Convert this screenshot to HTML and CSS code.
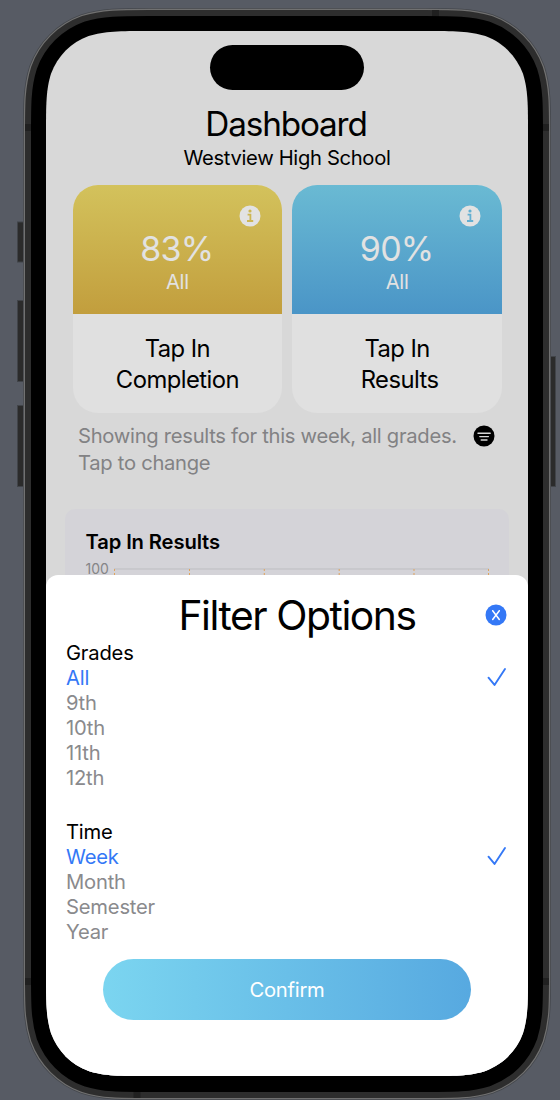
FILE: index.html
```html
<!DOCTYPE html>
<html lang="en">
<head>
<meta charset="utf-8">
<title>Dashboard</title>
<link rel="stylesheet" href="styles.css">
</head>
<body>
<div class="device">
  <svg class="frame" width="560" height="1100" viewBox="0 0 560 1100" aria-hidden="true">
    <defs>
      <path id="body" d="M149.200 31 H424.800 C454.500 31 469.400 31 485.400 36.100 C502.800 42.400 516.600 56.200 522.900 73.600 C528 89.600 528 104.500 528 134.200 V973.800 C528 1003.500 528 1018.400 522.900 1034.400 C516.600 1051.800 502.800 1065.600 485.400 1071.900 C469.400 1077 454.500 1077 424.800 1077 H149.200 C119.500 1077 104.600 1077 88.600 1071.900 C71.200 1065.600 57.400 1051.800 51.100 1034.400 C46 1018.400 46 1003.500 46 973.800 V134.200 C46 104.500 46 89.600 51.100 73.600 C57.400 56.200 71.200 42.400 88.600 36.100 C104.600 31 119.500 31 149.200 31 Z"/>
    </defs>
    <g fill="#2b2b2b" stroke="#414449" stroke-width="1">
      <rect x="17.500" y="222" width="8" height="40"/>
      <rect x="17.500" y="300.500" width="8" height="81"/>
      <rect x="17.500" y="405.500" width="8" height="81"/>
      <rect x="549" y="356.500" width="6.500" height="130"/>
    </g>
    <use href="#body" stroke="#44474c" stroke-width="46"/>
    <use href="#body" stroke="#717171" stroke-width="44.400"/>
    <use href="#body" stroke="#2d2d2d" stroke-width="42"/>
    <g fill="#202020">
      <rect x="432" y="10" width="7" height="8"/>
      <rect x="133.500" y="1090" width="7" height="8"/>
      <rect x="25" y="124" width="7" height="7"/>
      <rect x="542" y="124" width="7" height="7"/>
      <rect x="25" y="978" width="7" height="7"/>
      <rect x="542" y="978" width="7" height="7"/>
    </g>
    <use href="#body" stroke="#000" stroke-width="30"/>
  </svg>

  <div class="screen">
    <main class="dashboard">
      <div class="island"></div>
      <h1 class="title">Dashboard</h1>
      <p class="school">Westview High School</p>

      <div class="cards">
        <section class="card">
          <div class="card-top gold">
            <svg class="info" width="22" height="22" viewBox="0 0 22 22"><circle cx="11" cy="11" r="10.500" fill="#e2e2e2"/><circle cx="11" cy="6" r="1.600" fill="#cdb652"/><path d="M8.600 9.700h2.800v6M8 16h6.200" fill="none" stroke="#cdb652" stroke-width="1.800"/></svg>
            <p class="score">83%</p>
            <p class="scope">All</p>
          </div>
          <h2 class="card-name">Tap In<br>Completion</h2>
        </section>
        <section class="card">
          <div class="card-top blue">
            <svg class="info" width="22" height="22" viewBox="0 0 22 22"><circle cx="11" cy="11" r="10.500" fill="#e2e2e2"/><circle cx="11" cy="6" r="1.600" fill="#62afd1"/><path d="M8.600 9.700h2.800v6M8 16h6.200" fill="none" stroke="#62afd1" stroke-width="1.800"/></svg>
            <p class="score">90%</p>
            <p class="scope">All</p>
          </div>
          <h2 class="card-name">Tap In<br><span class="results">Results</span></h2>
        </section>
      </div>

      <div class="summary">
        <p><span class="showing">Showing results for this week, all grades.</span><br><span class="change">Tap to change</span></p>
        <svg width="22" height="22" viewBox="0 0 22 22"><circle cx="11" cy="11" r="10.500"/><path d="M5 8.200h12.200M6.800 11.600h8.600M8.200 15h5.800" stroke="#d8d8d8" stroke-width="1.400" stroke-linecap="round"/></svg>
      </div>

      <section class="chart">
        <h3 class="chart-title">Tap In Results</h3>
        <div class="plot">
          <span class="axis">100</span>
          <svg width="376" height="20" viewBox="0 0 376 20"><path d="M1 10h375" stroke="#bdbdc1"/><path d="M1.500 10v10M76.500 10v10M151.300 10v10M226.200 10v10M301 10v10M375.500 10v10" stroke="#dfa35c" stroke-dasharray="2 2"/></svg>
        </div>
      </section>
    </main>

    <section class="sheet">
      <header class="sheet-head">
        <h2 class="sheet-title">Filter Options</h2>
        <svg class="close" width="22" height="22" viewBox="0 0 22 22"><circle cx="11" cy="11" r="10.500" fill="#3478f6"/><path d="M7.700 6.700l6.600 8.800M14.300 6.700l-6.600 8.800" stroke="#fff" stroke-width="1.500" stroke-linecap="round"/></svg>
      </header>
      <ul class="options grades">
        <li class="group">Grades</li>
        <li class="selected"><span>All</span><svg width="20" height="20" viewBox="0 0 20 20"><path d="M1.500 10.700l6 7.200L18 2" fill="none" stroke="#3478f6" stroke-width="1.900" stroke-linecap="round" stroke-linejoin="round"/></svg></li>
        <li>9th</li>
        <li>10th</li>
        <li>11th</li>
        <li>12th</li>
      </ul>
      <ul class="options">
        <li class="group">Time</li>
        <li class="selected"><span>Week</span><svg width="20" height="20" viewBox="0 0 20 20"><path d="M1.500 10.700l6 7.200L18 2" fill="none" stroke="#3478f6" stroke-width="1.900" stroke-linecap="round" stroke-linejoin="round"/></svg></li>
        <li>Month</li>
        <li>Semester</li>
        <li>Year</li>
      </ul>
      <button class="confirm">Confirm</button>
    </section>
  </div>
</div>
</body>
</html>
```
FILE: styles.css
```css
* { box-sizing: border-box; }
body {
  margin: 0;
  background: #575b64;
  font-family: Inter, "Liberation Sans", sans-serif;
  color: #000;
}
h1, h2, h3, p, ul { margin: 0; padding: 0; font-weight: 400; }
ul { list-style: none; }
svg { display: block; flex: none; }
.device { display: grid; width: 560px; height: 1100px; overflow: hidden; }
.frame, .screen { grid-area: 1 / 1; }
.screen {
  display: grid;
  grid-template-rows: 1045px;
  width: 482px;
  height: 1045px;
  margin: 31px 0 0 46px;
  background: #d8d8d8;
  clip-path: path("M103.200 0 H378.800 C408.500 0 423.400 0 439.400 5.100 C456.800 11.400 470.600 25.200 476.900 42.600 C482 58.600 482 73.500 482 103.200 V941.800 C482 971.500 482 986.400 476.900 1002.400 C470.600 1019.800 456.800 1033.600 439.400 1039.900 C423.400 1045 408.500 1045 378.800 1045 H103.200 C73.500 1045 58.600 1045 42.600 1039.900 C25.200 1033.600 11.400 1019.800 5.100 1002.400 C0 986.400 0 971.500 0 941.800 V103.200 C0 73.500 0 58.600 5.100 42.600 C11.400 25.200 25.200 11.400 42.600 5.100 C58.600 0 73.500 0 103.200 0 Z");
}
.dashboard, .sheet { grid-area: 1 / 1; }
.dashboard { display: flex; flex-direction: column; padding-top: 14px; }
.island { width: 154px; height: 45px; margin: 0 auto; border-radius: 23px; background: #000; }
.title { margin-top: 14px; padding-right: 2px; text-align: center; font-size: 33.300px; line-height: 40px; letter-spacing: -1.150px; }
.school { text-align: center; font-size: 20.200px; line-height: 28px; letter-spacing: -0.330px; }
.cards { display: flex; gap: 10px; margin: 12.500px 26px 0 26.500px; }
.card { flex: 1; height: 228.500px; border-radius: 25px; overflow: hidden; background: #e0e0e0; }
.card-top { display: flex; flex-direction: column; height: 129px; padding: 20px 21px 0; color: #e2e2e2; text-align: center; }
.gold { background: linear-gradient(#d3c25c, #c29e3d); }
.blue { background: linear-gradient(#6abad3, #4a95c7); }
.info { align-self: flex-end; }
.score { margin-top: 2px; padding-right: 1px; font-size: 34px; line-height: 40px; font-weight: 370; letter-spacing: -0.800px; }
.scope { font-size: 20.200px; line-height: 26px; font-weight: 370; letter-spacing: -0.300px; }
.card-name { padding-top: 19px; text-align: center; font-size: 23.800px; line-height: 31px; letter-spacing: -0.550px; }
.results { padding-left: 5px; }
.summary { display: flex; justify-content: space-between; padding: 8.500px 33px 0 32px; color: #828284; font-size: 20.200px; line-height: 27px; letter-spacing: -0.280px; }
.summary svg { margin-top: 3.500px; }
.chart { flex: 1; margin: 33px 19.500px 0 19px; padding: 20px 20px 0 20.500px; border-radius: 10px; background: #d4d3d8; }
.chart-title { font-size: 20.200px; line-height: 26px; font-weight: 600; letter-spacing: -0.120px; }
.plot { display: flex; justify-content: space-between; margin-top: 4px; }
.axis { color: #858587; font-size: 14px; line-height: 20px; }
.sheet { z-index: 1; display: flex; flex-direction: column; height: 501px; margin-top: 544px; padding: 15px 21px 0 20px; border-radius: 12px 12px 0 0; background: #fff; }
.sheet-head { display: grid; grid-template-columns: 22px 1fr 22px; grid-template-rows: 50px; align-items: center; height: 50px; }
.sheet-title { grid-column: 2; padding: 1px 0 0 21px; text-align: center; font-size: 40.800px; line-height: 49px; letter-spacing: -1.450px; }
.close { grid-column: 3; margin-top: -1px; }
.options { color: #8a8a8d; font-size: 20.200px; line-height: 25px; letter-spacing: -0.200px; }
.options li { display: flex; justify-content: space-between; align-items: center; height: 25px; }
.options .group { color: #000; }
.options .selected { color: #3478f6; }
.options svg { margin-top: -1px; }
.grades { margin-bottom: 29px; }
.confirm { width: 368px; height: 61px; margin: 15px 0 0 37px; padding: 0; border: 0; border-radius: 31px; background: linear-gradient(90deg, #7bd5f0, #57a9e0); color: #fff; font: 400 20.200px/61px Inter, sans-serif; letter-spacing: -0.250px; }
```
